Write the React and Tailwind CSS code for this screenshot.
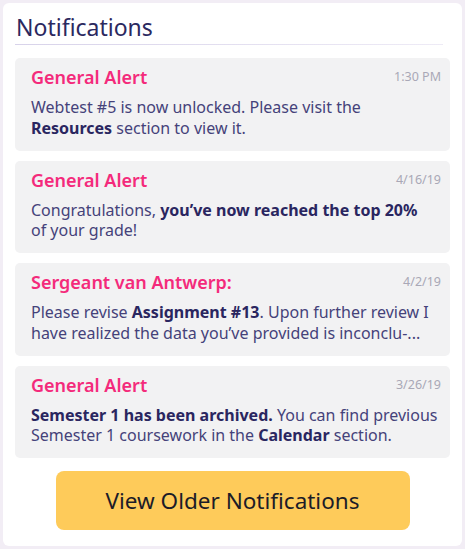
import React from 'react';

const B = ({ children }) => <b className="font-bold text-[#2a2660]">{children}</b>;

const notes = [
  {
    title: 'General Alert',
    time: '1:30 PM',
    lines: [
      <>Webtest #5 is now unlocked. Please visit the</>,
      <><B>Resources</B> section to view it.</>,
    ],
  },
  {
    title: 'General Alert',
    time: '4/16/19',
    lines: [
      <>Congratulations, <B>you’ve now reached the top 20%</B></>,
      <>of your grade!</>,
    ],
  },
  {
    title: 'Sergeant van Antwerp:',
    time: '4/2/19',
    lines: [
      <>Please revise <B>Assignment #13</B>. Upon further review I</>,
      <>have realized the data you’ve provided is inconclu-...</>,
    ],
  },
  {
    title: 'General Alert',
    time: '3/26/19',
    lines: [
      <><B>Semester 1 has been archived.</B> You can find previous</>,
      <>Semester 1 coursework in the <B>Calendar</B> section.</>,
    ],
  },
];

const NotificationCard = ({ title, time, lines }) => {
  return (
    <div className="bg-[#f2f2f3] rounded-[5px] pl-4 pr-[9px] pt-[7px] h-[92.5px]">
      <div className="flex items-start justify-between">
        <h3 className="text-[18px] leading-[24px] font-semibold text-[#f42a7b]">{title}</h3>
        <span className="text-[12.5px] leading-[20px] mt-[2px] text-[#a9a8b6]">{time}</span>
      </div>
      <div className="mt-[8px] text-[16px] leading-[20.5px] text-[#45427a]">
        {lines.map((l, i) => (
          <p key={i} className="whitespace-nowrap">{l}</p>
        ))}
      </div>
    </div>
  );
};

const App = () => {
  return (
    <div className="w-[465px] h-[549px] bg-[#f2edf5] p-[3px] font-['Noto_Sans',sans-serif]">
      <div className="bg-white rounded-[6px] h-full px-[12px] pt-[9px]">
        <h2 className="text-[23px] leading-[30px] text-[#2b295f] pl-[1px]">Notifications</h2>
        <div className="mt-[2px] h-[1px] w-[428px] bg-gradient-to-r from-[#d8d3ea] to-[#eeebf6]" />
        <div className="mt-[13px] flex flex-col gap-[10px]">
          {notes.map((n, i) => (
            <NotificationCard key={i} {...n} />
          ))}
        </div>
        <div className="flex justify-center mt-[13px]">
          <button className="w-[354px] h-[59px] rounded-[8px] bg-[#fecb5a] text-[22.5px] text-[#1c1c28]">
            View Older Notifications
          </button>
        </div>
      </div>
    </div>
  );
};

export default App;
